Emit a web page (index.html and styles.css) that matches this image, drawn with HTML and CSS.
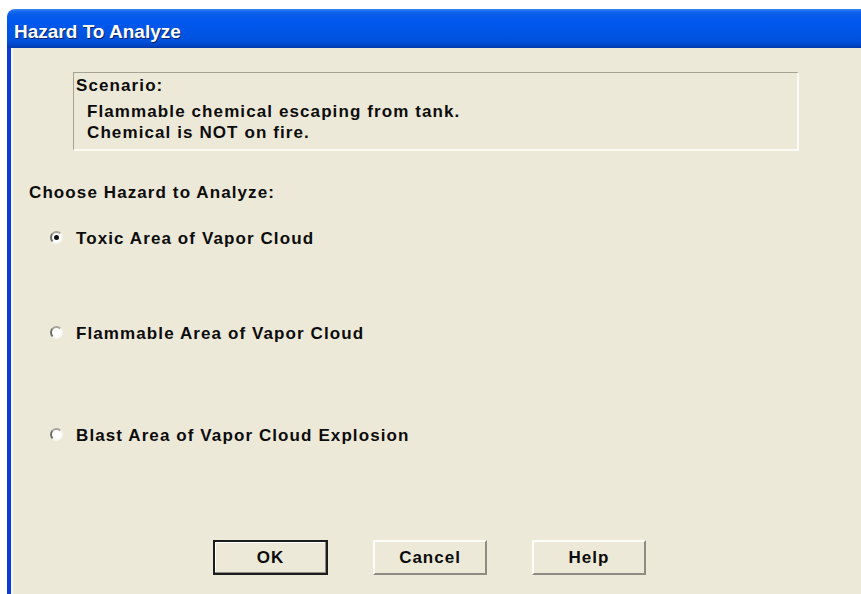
FILE: index.html
```html
<!DOCTYPE html>
<html lang="en">
<head>
<meta charset="utf-8">
<title>Hazard To Analyze</title>
<link rel="stylesheet" href="styles.css">
</head>
<body>
<div class="window">
  <div class="titlebar"><span class="title">Hazard To Analyze</span></div>
  <div class="client">
    <div class="scenario">
      <div class="scn-head">Scenario:</div>
      <div class="scn-line">Flammable chemical escaping from tank.</div>
      <div class="scn-line">Chemical is NOT on fire.</div>
    </div>
    <div class="prompt">Choose Hazard to Analyze:</div>
    <div class="option opt-1"><span class="radio checked"></span><span class="label">Toxic Area of Vapor Cloud</span></div>
    <div class="option opt-2"><span class="radio"></span><span class="label">Flammable Area of Vapor Cloud</span></div>
    <div class="option opt-3"><span class="radio"></span><span class="label">Blast Area of Vapor Cloud Explosion</span></div>
    <div class="buttons">
      <button class="btn btn-default">OK</button>
      <button class="btn">Cancel</button>
      <button class="btn">Help</button>
    </div>
  </div>
</div>
</body>
</html>
```
FILE: styles.css
```css
html, body {
  margin: 0;
  padding: 0;
  background: #ffffff;
  overflow: hidden;
}

body {
  width: 861px;
  height: 594px;
  font-family: "Liberation Sans", Arial, sans-serif;
  font-weight: bold;
  font-size: 17px;
  letter-spacing: 1.1px;
  color: #0c0c0c;
}

.window {
  margin: 9px 0 0 7px;
  height: 585px;
  display: flex;
  flex-direction: column;
}

/* blue caption bar */
.titlebar {
  height: 39px;
  flex: none;
  border-radius: 8px 0 0 0;
  background: linear-gradient(to bottom,
    #3a8cf8 0px, #1a6cf0 2px, #0a5de9 5px, #0058ee 12px,
    #0054e3 26px, #004fd8 33px, #0045c7 36px, #003aa8 39px);
  box-sizing: border-box;
  padding-left: 7px;
  overflow: hidden;
}

.title {
  display: inline-block;
  color: #ffffff;
  font-size: 19px;
  letter-spacing: 0;
  line-height: 20px;
  padding-top: 13px;
  vertical-align: top;
  text-shadow: 1px 1px 0 #0a246a;
}

/* dialog body */
.client {
  flex: 1;
  background: #ece9d8;
  border-left: 4px solid #0a3ad8;
  box-shadow: inset 2px 0 0 #f7f6ef;
  display: flex;
  flex-direction: column;
  align-items: flex-start;
}

.scenario {
  margin: 24px 0 0 62px;
  width: 726px;
  height: 79px;
  box-sizing: border-box;
  border-style: solid;
  border-width: 1px 2px 2px 1px;
  border-color: #a5a294 #fbfaf4 #fbfaf4 #a5a294;
  padding: 2px 0 0 2px;
  line-height: 21px;
}

.scn-head {
  margin-bottom: 5px;
}

.scn-line {
  padding-left: 11px;
}

.prompt {
  margin: 31px 0 0 18px;
  line-height: 21px;
}

.option {
  display: flex;
  align-items: center;
  margin-left: 39px;
  line-height: 21px;
}

.opt-1 { margin-top: 25px; }
.opt-2 { margin-top: 74px; }
.opt-3 { margin-top: 81px; }

.radio {
  position: relative;
  width: 13px;
  height: 13px;
  box-sizing: border-box;
  border-radius: 50%;
  border: 2px solid;
  border-color: #a8a69c #f7f6f1 #f7f6f1 #6f6d64;
  background: #ffffff;
  margin-right: 13px;
  margin-top: -2px;
}

.radio.checked::after {
  content: "";
  position: absolute;
  left: 2px;
  top: 2px;
  width: 5px;
  height: 5px;
  border-radius: 50%;
  background: #111111;
}

.buttons {
  margin: 94px 0 0 202px;
  display: flex;
  gap: 45px;
}

.btn {
  width: 114px;
  height: 35px;
  box-sizing: border-box;
  background: #ece9d8;
  font: inherit;
  letter-spacing: 1px;
  color: #0c0c0c;
  border-style: solid;
  border-width: 2px;
  border-color: #fdfdf9 #8e8c82 #8e8c82 #fdfdf9;
  padding: 0;
}

.btn-default {
  width: 115px;
  border: 2px solid #1c1c1c;
  box-shadow: inset -1px -1px 0 #8e8c82, inset 1px 1px 0 #ffffff;
}
```
